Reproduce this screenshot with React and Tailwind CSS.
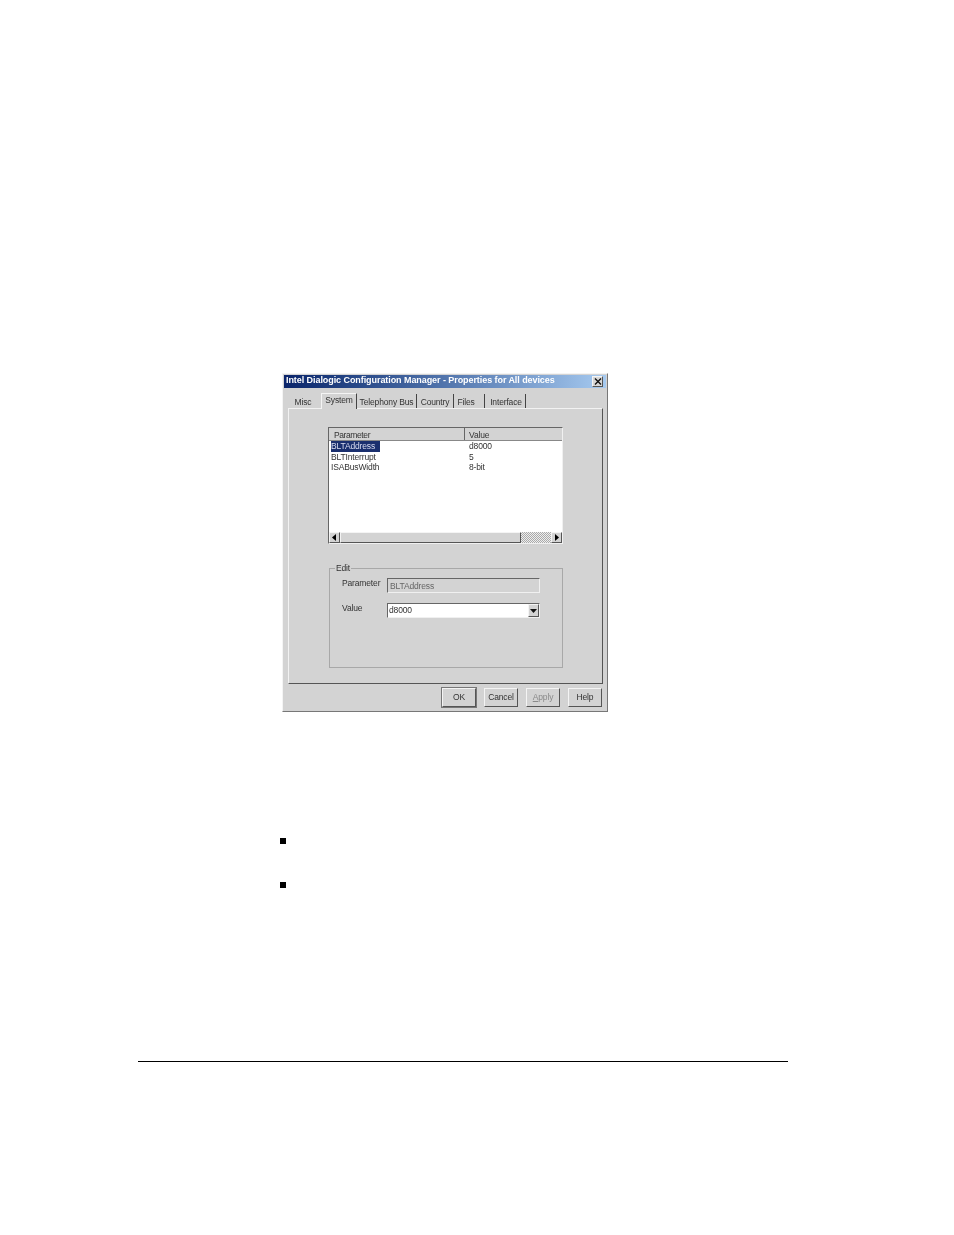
import React from 'react';

const raised = 'border border-t-[#f4f4f4] border-l-[#f4f4f4] border-r-[#555] border-b-[#555]';
const sunken = 'border border-t-[#666] border-l-[#666] border-r-[#f0f0f0] border-b-[#f0f0f0]';

const tabs = [
  { label: 'Misc', w: 'w-[32px]', extra: 'pr-[4px]' },
  { label: 'System', w: 'w-[36px]', active: true },
  { label: 'Telephony Bus', w: 'w-[60px]' },
  { label: 'Country', w: 'w-[37px]' },
  { label: 'Files', w: 'w-[31px]', extra: 'pr-[6px]' },
  { label: 'Interface', w: 'w-[41px]', extra: 'pl-[2px]' },
];

const rows = [
  { name: 'BLTAddress', value: 'd8000', selected: true },
  { name: 'BLTInterrupt', value: '5' },
  { name: 'ISABusWidth', value: '8-bit' },
];

const Tab = ({ label, w, active, extra = '' }) => (
  <div
    className={
      active
        ? `${w} h-[16px] -mb-px z-10 bg-[#d3d3d3] border-t border-l border-t-[#f4f4f4] border-l-[#f4f4f4] border-r border-r-[#444] text-center leading-[13px]`
        : `${w} h-[14px] ${label === 'Misc' ? '' : 'border-r border-r-[#444]'} ${extra} text-center leading-[16px]`
    }
  >
    {label}
  </div>
);

const Arrow = ({ dir }) => (
  <svg width="5" height="7" viewBox="0 0 5 7" className="text-black">
    {dir === 'left' ? <path d="M4 0v7L0 3.5z" fill="currentColor" /> : <path d="M1 0v7l4-3.5z" fill="currentColor" />}
  </svg>
);

const Button = ({ children, disabled, primary }) => (
  <div
    className={`w-[34px] h-[19px] flex items-center justify-center bg-[#d3d3d3] ${raised} ${primary ? 'border-r-[#222] border-b-[#222] outline outline-1 outline-[#777]' : ''} ${disabled ? 'text-[#8a8a8a]' : ''}`}
  >
    {children}
  </div>
);

export default function App() {
  return (
    <div className="w-[954px] h-[1235px] bg-white flex flex-col font-['Liberation_Sans',sans-serif] text-[8.5px] tracking-[-0.15px] text-[#333]">
      <div className={`ml-[282px] mt-[373px] w-[326px] h-[339px] flex flex-col bg-[#d3d3d3] blur-[0.3px] ${raised} border-t-[#e4e4e4] border-l-[#e4e4e4] border-r-[#777] border-b-[#777]`}>
        {/* title bar */}
        <div className="h-[13px] mx-px mt-px flex items-center justify-between pl-[2px] pr-[3px] bg-gradient-to-r from-[#0a246a] to-[#a6caf0] text-white font-bold text-[9px] tracking-[-0.07px]">
          <span className="pb-px">Intel Dialogic Configuration Manager - Properties for All devices</span>
          <div className={`w-[11px] h-[11px] flex items-center justify-center bg-[#d8d8d8] ${raised} border-r-[#222] border-b-[#222]`}>
            <svg width="8" height="7" viewBox="0 0 8 7">
              <path d="M1 0.5l6 6M7 0.5l-6 6" stroke="#111" strokeWidth="1.4" fill="none" />
            </svg>
          </div>
        </div>

        {/* tabs */}
        <div className="flex items-end mt-[5px] ml-[6px] h-[15px]">
          {tabs.map((t) => (
            <Tab key={t.label} {...t} />
          ))}
        </div>

        {/* tab panel */}
        <div className="ml-[5px] mr-[4px] h-[276px] border border-t-[#f2f2f2] border-l-[#f2f2f2] border-r-[#555] border-b-[#555] pl-[39px] pt-[18px] flex flex-col">
          <div className={`w-[235px] h-[117px] flex flex-col bg-white ${sunken} border-t-[#555] border-l-[#555]`}>
            <div className="h-[13px] flex bg-[#d3d3d3] border-b border-b-[#888] leading-[14px]">
              <div className="w-[136px] pl-[5px] border-r border-r-[#666] tracking-[-0.4px]">Parameter</div>
              <div className="pl-[4px]">Value</div>
            </div>
            <div className="flex-1 flex flex-col">
              {rows.map((r) => (
                <div key={r.name} className="h-[10.5px] flex leading-[10.5px]">
                  <div className="w-[140px] pl-[2px]">
                    <span className={r.selected ? 'inline-block w-[49px] bg-[#1a2f6e] text-[#d8dcf0]' : ''}>{r.name}</span>
                  </div>
                  <div>{r.value}</div>
                </div>
              ))}
            </div>
            <div className="h-[11px] flex bg-[#d3d3d3]">
              <div className={`w-[11px] flex items-center justify-center ${raised}`}>
                <Arrow dir="left" />
              </div>
              <div className={`w-[181px] ${raised}`} />
              <div className="flex-1 bg-[repeating-conic-gradient(#aaa_0_25%,#eee_0_50%)] bg-[length:2px_2px]" />
              <div className={`w-[11px] flex items-center justify-center ${raised}`}>
                <Arrow dir="right" />
              </div>
            </div>
          </div>

          <fieldset className="mt-[19px] w-[234px] ml-px h-[105px] border border-[#a8a8a8] pl-[12px]">
            <legend className="ml-[-7px] px-px leading-[10px]">Edit</legend>
            <div className="flex items-start mt-[5px]">
              <span className="w-[45px] leading-[10px]">Parameter</span>
              <div className={`w-[153px] h-[15px] pl-[2px] leading-[15px] text-[#666] ${sunken}`}>BLTAddress</div>
            </div>
            <div className="flex items-start mt-[10px]">
              <span className="w-[45px] leading-[10px]">Value</span>
              <div className={`w-[153px] h-[15px] pl-[1px] flex items-center justify-between bg-white ${sunken} border-t-[#555] border-l-[#555]`}>
                <span>d8000</span>
                <div className={`w-[11px] h-[13px] flex items-center justify-center bg-[#d3d3d3] ${raised}`}>
                  <svg width="7" height="4" viewBox="0 0 7 4">
                    <path d="M0 0h7L3.5 4z" fill="#111" />
                  </svg>
                </div>
              </div>
            </div>
          </fieldset>
        </div>

        {/* footer buttons */}
        <div className="flex justify-end gap-[8px] mt-[4px] pr-[5px]">
          <Button primary>OK</Button>
          <Button>Cancel</Button>
          <Button disabled><span><span className="underline">A</span>pply</span></Button>
          <Button>Help</Button>
        </div>
      </div>

      {/* bullets */}
      <div className="ml-[280px] mt-[126px] flex flex-col gap-[38px]">
        <div className="w-[6px] h-[6px] bg-black" />
        <div className="w-[6px] h-[6px] bg-black" />
      </div>

      <div className="ml-[138px] mt-[173px] w-[650px] h-px bg-black" />
    </div>
  );
}
